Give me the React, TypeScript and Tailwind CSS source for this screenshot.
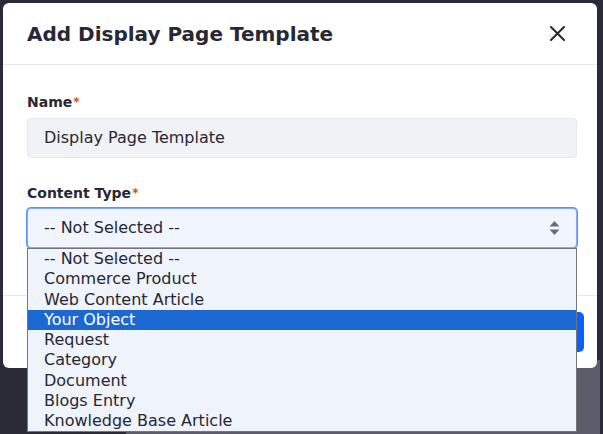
import React from 'react';

const options = [
  '-- Not Selected --',
  'Commerce Product',
  'Web Content Article',
  'Your Object',
  'Request',
  'Category',
  'Document',
  'Blogs Entry',
  'Knowledge Base Article',
];

const Asterisk = () => <span className="text-[#c05a00] text-[12px] font-bold align-top ml-[1px]">*</span>;

export default function App() {
  return (
    <div
      className="relative w-[603px] h-[434px] overflow-hidden bg-[#2b2b37] pt-[3px] pl-[3px]"
      style={{ fontFamily: '"DejaVu Sans", sans-serif' }}
    >
      {/* page behind the backdrop */}
      <div className="absolute left-[126px] top-[360px] w-[474px] h-[80px] bg-[#5c5c6a]" />

      {/* Modal */}
      <div className="relative w-[594px] h-[365px] bg-white rounded-[6px] flex flex-col text-[#272833]">
        <div className="h-[62px] flex items-center justify-between pl-[24px] pr-[32px] border-b border-[#e7e7ed]">
          <h1 className="text-[20px] font-bold mt-[1px]">Add Display Page Template</h1>
          <svg width="15" height="15" viewBox="0 0 15 15" className="text-[#272833]">
            <path d="M1 1 L14 14 M14 1 L1 14" stroke="currentColor" strokeWidth="2" strokeLinecap="round" />
          </svg>
        </div>

        <div className="flex-1 px-[24px] pt-[27px] border-b border-[#e7e7ed]">
          <label className="block text-[14px] font-bold leading-[20px] mb-[6px]">
            Name<Asterisk />
          </label>
          <div className="h-[40px] w-[550px] rounded-[4px] bg-[#f1f2f5] border border-[#e7e7ed] flex items-center pl-[16px] text-[16px]">
            Display Page Template
          </div>

          <label className="block text-[14px] font-bold leading-[20px] mt-[25px] mb-[5px]">
            Content Type<Asterisk />
          </label>
          <div className="relative">
            <div className="h-[40px] w-[550px] rounded-[4px] bg-[#f0f5ff] border border-[#80acff] shadow-[0_0_0_1px_#5b94f7] flex items-center justify-between pl-[16px] pr-[16px] text-[16px]">
              <span>-- Not Selected --</span>
              <svg width="11" height="16" viewBox="0 0 11 16" className="text-[#6b6c7e]">
                <path d="M5.5 1 L10.5 6.5 L0.5 6.5 Z" fill="currentColor" />
                <path d="M5.5 15 L10.5 9.5 L0.5 9.5 Z" fill="currentColor" />
              </svg>
            </div>

            {/* open option list */}
            <div className="absolute left-0 top-[40px] w-[550px] h-[184px] bg-[#eff3fc] border border-[#767676] z-10 text-[16px]">
              {options.map((o) => (
                <div
                  key={o}
                  className={`h-[20.3px] leading-[20px] pl-[16px] ${o === 'Your Object' ? 'bg-[#1b68d3] text-white' : 'text-[#272833]'}`}
                >
                  {o}
                </div>
              ))}
            </div>
          </div>
        </div>

        <div className="h-[72px] flex items-center justify-end pr-[13px]">
          <div className="h-[40px] w-[60px] rounded-[5px] bg-[#0b5fff]" />
        </div>
      </div>
    </div>
  );
}
